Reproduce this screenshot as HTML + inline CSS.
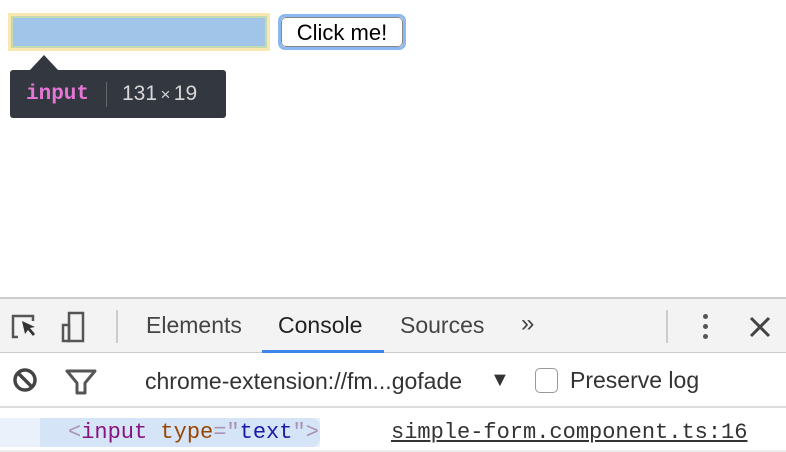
<!DOCTYPE html>
<html><head><meta charset="utf-8"><style>
*{margin:0;padding:0;box-sizing:border-box}
body{width:786px;height:452px;background:#fff;position:relative;overflow:hidden;font-family:"Liberation Sans",sans-serif}
.a{position:absolute}
.m{font-family:"Liberation Mono",monospace}
</style></head><body>
<div class="a" style="left:8px;top:13px;width:262px;height:38px;background:#f8e7b0"></div>
<div class="a" style="left:11px;top:16px;width:256px;height:32px;background:#c4dbb0"></div>
<div class="a" style="left:13px;top:18px;width:252px;height:28px;background:#a0c5e8"></div>
<div class="a" style="left:278px;top:14px;width:128px;height:36px;border:3px solid #8ab8f0;border-radius:7px;background:#fff"></div>
<div class="a" style="left:281px;top:17px;width:122px;height:30px;border:1px solid #888;border-radius:5px;background:#fff;font-size:22px;line-height:30px;text-align:center;color:#000">Click me!</div>
<div class="a" style="left:30px;top:55px;width:0;height:0;border-left:14px solid transparent;border-right:14px solid transparent;border-bottom:15px solid #333740"></div>
<div class="a" style="left:10px;top:70px;width:216px;height:48px;background:#333740;border-radius:3px"></div>
<div class="a m" style="left:26px;top:80px;font-weight:bold;font-size:21px;line-height:30px;color:#e676d6">input</div>
<div class="a" style="left:106px;top:82px;width:1px;height:25px;background:#666"></div>
<div class="a" style="left:122px;top:79px;font-size:21px;line-height:30px;color:#d8d8d8;white-space:pre">131<span style="font-size:17px">&#8201;×&#8201;</span>19</div>

<div class="a" style="left:0;top:297px;width:786px;height:2px;background:#ccc"></div>
<div class="a" style="left:0;top:299px;width:786px;height:54px;background:#f3f3f3;border-bottom:1px solid #ccc"></div>
<svg class="a" style="left:8px;top:310px" width="90" height="34" viewBox="0 0 90 34">
<path d="M10 27H5V6h20v5" fill="none" stroke="#555" stroke-width="2.5"/>
<path d="M14 11l13 6-5 1 5 6-2 2-5-6-3 4z" fill="#333"/>
<rect x="61" y="3" width="14" height="28" fill="none" stroke="#555" stroke-width="2.5"/>
<rect x="55" y="15" width="6" height="16" fill="none" stroke="#555" stroke-width="2.5"/>
</svg>
<div class="a" style="left:116px;top:310px;width:2px;height:33px;background:#ccc"></div>
<div class="a" style="left:146px;top:312px;font-size:23px;color:#444">Elements</div>
<div class="a" style="left:278px;top:312px;font-size:23px;color:#222">Console</div>
<div class="a" style="left:400px;top:312px;font-size:23px;color:#444">Sources</div>
<div class="a" style="left:521px;top:310px;font-size:24px;color:#444">»</div>
<div class="a" style="left:262px;top:350px;width:122px;height:3px;background:#3b86e8"></div>
<div class="a" style="left:666px;top:310px;width:2px;height:33px;background:#ccc"></div>
<div class="a" style="left:703px;top:314px;width:5px;height:5px;border-radius:50%;background:#555;box-shadow:0 10px 0 #555,0 20px 0 #555"></div>
<svg class="a" style="left:748px;top:315px" width="24" height="24"><path d="M3 3l18 18M21 3L3 21" stroke="#444" stroke-width="3"/></svg>

<div class="a" style="left:0;top:406px;width:786px;height:2px;background:#ddd"></div>
<svg class="a" style="left:10px;top:366px" width="90" height="30">
<circle cx="15" cy="14" r="10" fill="none" stroke="#444" stroke-width="3.5"/><path d="M8 7l14 14" stroke="#444" stroke-width="3.5"/>
<path d="M57 5h28l-10 12v10h-8V17z" fill="none" stroke="#555" stroke-width="3" stroke-linejoin="round"/>
</svg>
<div class="a" style="left:145px;top:368px;font-size:23px;color:#333;width:334px;overflow:hidden;white-space:nowrap">chrome-extension://fm...gofade</div>
<div class="a" style="left:490px;top:369px;font-size:20px;color:#333">▼</div>
<div class="a" style="left:535px;top:368px;width:23px;height:25px;border:1px solid #999;border-radius:5px;background:#fff"></div>
<div class="a" style="left:570px;top:367px;font-size:23px;color:#333">Preserve log</div>

<div class="a" style="left:0;top:418px;width:320px;height:29px;background:#eaf1fb"></div>
<div class="a" style="left:40px;top:418px;width:280px;height:29px;background:#d6e4f7;border-radius:0 8px 8px 0"></div>
<div class="a m" style="left:68px;top:419px;font-size:22px;line-height:27px;white-space:pre"><span style="color:#a893b5">&lt;</span><span style="color:#881280">input</span> <span style="color:#994500">type</span><span style="color:#a893b5">="</span><span style="color:#1a1aa6">text</span><span style="color:#a893b5">"&gt;</span></div>
<div class="a m" style="left:391px;top:419px;font-size:22px;line-height:27px;color:#333;text-decoration:underline">simple-form.component.ts:16</div>
<div class="a" style="left:0;top:450px;width:786px;height:2px;background:#eee"></div>
</body></html>
